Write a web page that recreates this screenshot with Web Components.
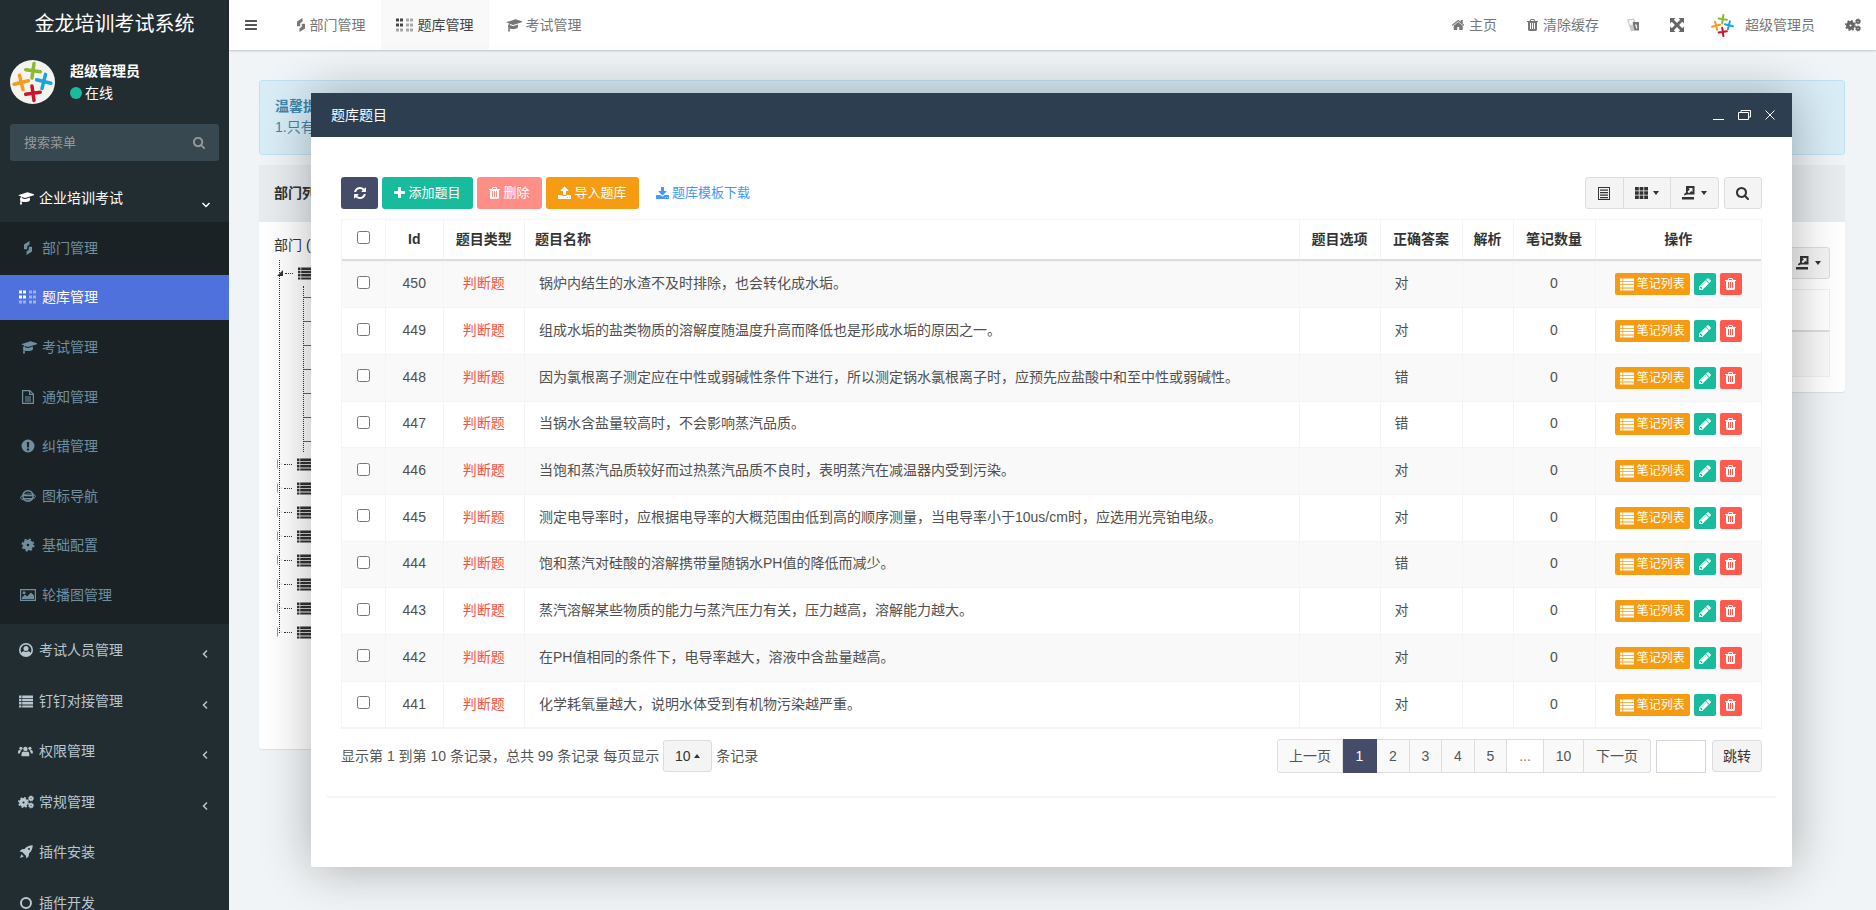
<!DOCTYPE html>
<html lang="zh">
<head>
<meta charset="utf-8">
<title>金龙培训考试系统</title>
<style>
html, body { margin: 0; height: 100%; overflow: hidden; }
body {
    display: flex;
    background: #f1f4f6;
    color: #333;
    font: 14px/20px "Liberation Sans", "Noto Sans CJK SC", sans-serif;
}
</style>
</head>
<body>
<side-bar></side-bar>
<main-col>
    <top-bar></top-bar>
    <page-content></page-content>
</main-col>
<exam-layer title="题库题目">
    <question-toolbar></question-toolbar>
    <question-table></question-table>
    <question-pager></question-pager>
</exam-layer>

<script>
'use strict'

const gear = (cx, cy, r) => `
    <circle cx="${cx}" cy="${cy}" r="${r * .5}" fill="none" stroke="currentColor" stroke-width="${r * .6}"/>
    <circle cx="${cx}" cy="${cy}" r="${r * .86}" fill="none" stroke="currentColor" stroke-width="${r * .28}"
        stroke-dasharray="${r * .338} ${r * .338}"/>`;

const ICONS = {
    bars: ['128 0 1536 1792', '<path d="M1664 1344v128q0 26-19 45t-45 19H192q-26 0-45-19t-19-45v-128q0-26 19-45t45-19h1408q26 0 45 19t19 45zm0-512v128q0 26-19 45t-45 19H192q-26 0-45-19t-19-45V832q0-26 19-45t45-19h1408q26 0 45 19t19 45zm0-512v128q0 26-19 45t-45 19H192q-26 0-45-19t-19-45V320q0-26 19-45t45-19h1408q26 0 45 19t19 45z"/>'],
    plus: ['192 0 1408 1792', '<path d="M1600 736v192q0 40-28 68t-68 28h-416v416q0 40-28 68t-68 28H800q-40 0-68-28t-28-68v-416H288q-40 0-68-28t-28-68V736q0-40 28-68t68-28h416V224q0-40 28-68t68-28h192q40 0 68 28t28 68v416h416q40 0 68 28t28 68z"/>'],
    search: ['64 0 1664 1792', '<path d="M1216 832q0-185-131.500-316.500T768 384 451.500 515.500 320 832t131.500 316.500T768 1280t316.500-131.500T1216 832zm512 832q0 52-38 90t-90 38q-54 0-90-38l-343-342q-179 124-399 124-143 0-273.500-55.500t-225-150-150-225T64 832t55.500-273.500 150-225 225-150T768 128t273.500 55.500 225 150 150 225T1472 832q0 220-124 399l343 343q37 37 37 90z"/>'],
    trash: ['192 0 1408 1792', '<path d="M704 1376V672q0-14-9-23t-23-9h-64q-14 0-23 9t-9 23v704q0 14 9 23t23 9h64q14 0 23-9t9-23zm256 0V672q0-14-9-23t-23-9h-64q-14 0-23 9t-9 23v704q0 14 9 23t23 9h64q14 0 23-9t9-23zm256 0V672q0-14-9-23t-23-9h-64q-14 0-23 9t-9 23v704q0 14 9 23t23 9h64q14 0 23-9t9-23zM672 384h448l-48-117q-7-9-17-11H738q-10 2-17 11zm928 32v64q0 14-9 23t-23 9h-96v948q0 83-47 143.500t-113 60.500H480q-66 0-113-58.500T320 1464V512h-96q-14 0-23-9t-9-23v-64q0-14 9-23t23-9h309l70-167q15-37 54-63t79-26h320q40 0 79 26t54 63l70 167h309q14 0 23 9t9 23z"/>'],
    home: ['100 0 1600 1792', '<path d="M1472 992v480q0 26-19 45t-45 19h-384v-384H768v384H384q-26 0-45-19t-19-45V992q0-1 .5-3t.5-3l575-474 575 474q1 2 1 6zm223-69l-62 74q-8 9-21 11h-3q-13 0-21-7L896 424l-692 577q-12 8-24 7-13-2-21-11l-62-74q-8-10-7-23.500t11-21.500l719-599q32-26 76-26t76 26l244 204V288q0-14 9-23t23-9h192q14 0 23 9t9 23v408l219 182q10 8 11 21.500t-7 23.500z"/>'],
    pencil: ['128 0 1536 1792', '<path d="M491 1536l91-91-235-235-91 91v107h128v128h107zm523-928q0-22-22-22-10 0-17 7l-542 542q-7 7-7 17 0 22 22 22 10 0 17-7l542-542q7-7 7-17zm-54-192l416 416-832 832H128v-416zm683 96q0 53-37 90l-166 166-416-416 166-165q36-38 90-38 53 0 91 38l235 234q37 39 37 91z"/>'],
    upload: ['64 0 1664 1792', '<path d="M1344 1472q0-26-19-45t-45-19-45 19-19 45 19 45 45 19 45-19 19-45zm256 0q0-26-19-45t-45-19-45 19-19 45 19 45 45 19 45-19 19-45zm128-224v320q0 40-28 68t-68 28H160q-40 0-68-28t-28-68v-320q0-40 28-68t68-28h427q21 56 70.500 92t110.500 36h256q61 0 110.500-36t70.500-92h427q40 0 68 28t28 68zm-325-648q-17 40-59 40h-256v448q0 26-19 45t-45 19H768q-26 0-45-19t-19-45V640H448q-42 0-59-40-17-39 14-69l448-448q18-19 45-19t45 19l448 448q31 30 14 69z"/>'],
    download: ['64 0 1664 1792', '<g transform="translate(0 128)"><path d="M1344 1344q0-26-19-45t-45-19-45 19-19 45 19 45 45 19 45-19 19-45zm256 0q0-26-19-45t-45-19-45 19-19 45 19 45 45 19 45-19 19-45zm128-224v320q0 40-28 68t-68 28H160q-40 0-68-28t-28-68v-320q0-40 28-68t68-28h465l135 136q58 56 136 56t136-56l136-136h464q40 0 68 28t28 68zm-325-569q17 41-14 70l-448 448q-18 19-45 19t-45-19L403 621q-31-29-14-70 17-39 59-39h256V64q0-26 19-45t45-19h256q26 0 45 19t19 45v448h256q42 0 59 39z"/></g>'],
    refresh: ['128 0 1536 1792', '<path d="M1639 1056q0 5-1 7-64 268-268 434.500T892 1664q-146 0-282.500-55T366 1452l-129 129q-19 19-45 19t-45-19-19-45v-448q0-26 19-45t45-19h448q26 0 45 19t19 45-19 45l-137 137q71 66 161 102t187 36q134 0 250-65t186-179q11-17 53-117 8-23 30-23h192q13 0 22.500 9.500t9.500 22.500zm25-800v448q0 26-19 45t-45 19h-448q-26 0-45-19t-19-45 19-45l138-138q-148-137-349-137-134 0-250 65T460 628q-11 17-53 117-8 23-30 23H178q-13 0-22.500-9.500T146 736v-7q65-268 270-434.500T896 128q146 0 284 55.500T1425 340l130-129q19-19 45-19t45 19 19 45z"/>'],
    cap: ['0 0 2304 1792', '<path d="M1774 836l18 316q4 69-82 128t-235 93.500-323 34.500-323-34.500-235-93.500-82-128l18-316 574 181q22 7 48 7t48-7zm530-324q0 23-22 31L1162 895q-4 1-10 1t-10-1L790 783q-38 30-62.500 98.500T703 1025q64 37 64 111 0 70-59 108l59 441q2 14-8 25-10 12-24 12H544q-14 0-24-12-10-11-8-25l59-441q-59-38-59-108 0-74 66-113 11-209 99-333l-333-104q-22-8-22-31t22-31l1120-352q4-1 10-1t10 1l1120 352q22 8 22 31z"/>'],
    list: ['0 0 14 14', '<path d="M0 1.500h2.500v2.500H0zM3.200 1.500H14v2.500H3.200zM0 4.800h2.500v2.500H0zM3.200 4.800H14v2.500H3.200zM0 8.100h2.500v2.500H0zM3.200 8.100H14v2.500H3.200zM0 11.400h2.500v2.100H0zM3.200 11.400H14v2.100H3.200z"/>'],
    listalt: ['0 0 14 14', '<path fill-rule="evenodd" d="M1 1h12v13H1zM2 2v11h10V2z"/><path d="M3 3.500h8v1.200H3zM3 6h8v1.200H3zM3 8.500h8v1.200H3zM3 11h8v1.200H3z"/>'],
    th: ['0 0 13 14', '<path d="M0 1h3.800v3.400H0zM4.600 1h3.800v3.400H4.600zM9.200 1H13v3.400H9.200zM0 5.300h3.800v3.400H0zM4.600 5.300h3.800v3.400H4.600zM9.200 5.300H13v3.400H9.200zM0 9.600h3.800V13H0zM4.600 9.600h3.800V13H4.600zM9.200 9.600H13V13H9.200z"/>'],
    exportbox: ['0 0 14 14', '<path d="M0 11h12v2.600H0zM4 0h8.500v8.500H5L2.500 9.500 2 8l2-1.500z"/><path fill="#f4f4f4" d="M6.500 2h4v4L9.300 5 7 7.300 5.500 5.800 7.800 3.300z"/>'],
    braille: ['0 0 18 14', [[1, 2, 1], [5, 2, 1], [1, 7, 1], [5, 7, 1], [1, 12, .45], [5, 12, .45], [11, 2, .45], [15, 2, .45], [11, 7, .45], [15, 7, .45], [11, 12, .45], [15, 12, .45]]
        .map(d => `<rect x="${d[0] - 1}" y="${d[1] - 1.500}" width="3" height="3" fill-opacity="${d[2]}"/>`).join('')],
    bolt: ['0 0 10 14', '<path d="M6.500 0L1 3.500V8.200H4.200V5.200L6.500 3.600zM3.500 14L9 10.500V5.800H5.800V8.800L3.500 10.400z"/>'],
    file: ['0 0 12 14', '<path fill-rule="evenodd" d="M0 0h8l4 4v10H0zM1.200 1.200v11.600h9.600V5H7V1.200zM8.200 1.700v2.100h2.100z"/><path d="M3 6.500h6v1H3zM3 8.500h6v1H3zM3 10.500h6v1H3z"/>'],
    alert: ['0 0 14 14', '<path fill-rule="evenodd" d="M7 .5a6.500 6.500 0 1 0 0 13A6.500 6.500 0 0 0 7 .5zM5.800 3h2.400l-.3 5.500H6.100zM5.900 9.500h2.200v2H5.900z"/>'],
    ie: ['0 0 16 14', '<circle cx="8" cy="7" r="5.200" fill="none" stroke="currentColor" stroke-width="1.500"/><path d="M3 6h10v1.300H3zM3.500 9h9v1.100h-9z"/><ellipse cx="8" cy="8" rx="7.500" ry="3" fill="none" stroke="currentColor" stroke-width=".9" transform="rotate(-6 8 8)"/>'],
    gear: ['0 0 14 14', gear(7, 7, 6.500)],
    cogs: ['0 0 16 14', gear(5.500, 7.500, 5.500) + gear(13, 3.500, 3) + gear(13, 10.500, 3)],
    image: ['0 0 16 14', '<path fill-rule="evenodd" d="M0 1h16v12H0zM1.200 2.200v9.600h13.600V2.200z"/><circle cx="4" cy="4.800" r="1.500"/><path d="M2 11v-1.500l3-3 2 2 4-4 3 3V11z"/>'],
    usercircle: ['0 0 14 14', '<path fill-rule="evenodd" d="M7 0a7 7 0 1 0 0 14A7 7 0 0 0 7 0zM7 1.500a5.500 5.500 0 0 1 4.600 8.500C11 8.800 10 8.300 9 8.300c-.6.500-1.300.7-2 .7s-1.400-.2-2-.7c-1 0-2 .5-2.600 1.700A5.500 5.500 0 0 1 7 1.500z"/><circle cx="7" cy="5.500" r="2.500"/>'],
    users: ['0 -1.500 18 17', '<circle cx="9" cy="4.500" r="2.700"/><circle cx="3.500" cy="3.800" r="1.900"/><circle cx="14.500" cy="3.800" r="1.900"/><path d="M4.300 13.500V10.500c0-2 1.200-3 2.700-3 .6.400 1.300.6 2 .6s1.400-.2 2-.6c1.500 0 2.700 1 2.700 3v3zM0 10V8c0-1.500 1-2.300 2-2.300.5.400 1 .6 1.700.6.200 0 .4 0 .6-.1-.3.700-.7 1.300-1.200 1.700-.5.500-.7 1.200-.8 2.100zM18 10V8c0-1.500-1-2.300-2-2.300-.5.400-1 .6-1.700.6-.2 0-.4 0-.6-.1.300.700.7 1.300 1.200 1.700.5.500.7 1.200.8 2.100z"/>'],
    rocket: ['0 0 14 14', '<path fill-rule="evenodd" d="M13.700.3c-3-.1-6 1.200-8.200 3.700L2.800 4.300.5 6.600l2.700.5 3.700 3.700.5 2.700 2.300-2.300.3-2.700c2.500-2.200 3.800-5.200 3.700-8.200zM10 3a1 1 0 1 1 0 2 1 1 0 0 1 0-2z"/><path d="M2.500 9.300l2.200 2.200-3.700 1.500z"/>'],
    ring: ['0 0 14 14', '<path fill-rule="evenodd" d="M7 1a6 6 0 1 0 0 12A6 6 0 0 0 7 1zM7 3a4 4 0 1 1 0 8 4 4 0 0 1 0-8z"/>'],
    expand: ['0 0 14 14', '<path d="M0 0h5.500L3.800 1.700 7 4.900l3.200-3.200L8.500 0H14v5.500l-1.700-1.700L9.100 7l3.200 3.200L14 8.500V14H8.500l1.700-1.700L7 9.100l-3.200 3.200L5.500 14H0V8.500l1.700 1.700L4.900 7 1.700 3.800 0 5.500z"/>'],
    translate: ['0 0 14 14', '<path fill="#c9c9c9" d="M1 1.500L8 .5l4 11-7 2z"/><path fill="#fff" d="M2.500 2.500L7 2l1.500 4-4.500 1z"/><path d="M6.500 4h6.500v8.500H8.500z"/><path fill="#fff" d="M9 6.500h1.500l.9 4h-1z"/>']
};

class FaIcon extends HTMLElement {

    constructor() {
        super();

        const shadow = this.attachShadow({mode: 'open'});
        const [box, inner] = ICONS[this.getAttribute('name')];

        shadow.innerHTML = `
            <style>
            :host {
                display: inline-block;
                line-height: 0;
                vertical-align: -.14em;
            }
            svg {
                display: block;
                flex: none;
                width: auto;
                height: 1em;
                fill: currentColor;
            }
            </style>
            <svg viewBox="${box}">${inner}</svg>
        `;
    }
}

customElements.define('fa-icon', FaIcon);

class AppLogo extends HTMLElement {

    constructor() {
        super();

        const shadow = this.attachShadow({mode: 'open'});
        const cross = (x, y, color, turn) => `
            <g transform="translate(${x} ${y}) rotate(${turn})" stroke="${color}" stroke-width="3.600" stroke-linecap="round">
                <path d="M-7.500 0H7.500M0-7.500V7.500"/>
            </g>
        `;

        shadow.innerHTML = `
            <style>
            :host {
                display: block;
                flex: none;
                border-radius: 50%;
                overflow: hidden;
                background: var(--logo-bg, #f4f4ef);
            }
            svg {
                display: block;
                width: 100%;
                height: 100%;
            }
            </style>
            <svg viewBox="0 0 45 45">
                ${cross(23, 11, '#8cb833', 8)}
                ${cross(11, 23, '#f39c1f', -14)}
                ${cross(34, 22, '#1ba3e0', 14)}
                ${cross(23, 34, '#c8162f', -8)}
            </svg>
        `;
    }
}

customElements.define('app-logo', AppLogo);

class SideBar extends HTMLElement {

    constructor() {
        super();

        const shadow = this.attachShadow({mode: 'open'});
        const subItems = [
            ['bolt', '部门管理'], ['braille', '题库管理', true], ['cap', '考试管理'], ['file', '通知管理'],
            ['alert', '纠错管理'], ['ie', '图标导航'], ['gear', '基础配置'], ['image', '轮播图管理']
        ];
        const topItems = [
            ['usercircle', '考试人员管理', true], ['list', '钉钉对接管理', true], ['users', '权限管理', true],
            ['cogs', '常规管理', true], ['rocket', '插件安装'], ['ring', '插件开发']
        ];

        shadow.innerHTML = `
            <style>
            :host {
                display: block;
                flex: none;
                width: 229px;
                height: 910px;
                overflow: hidden;
                background: #222d32;
                color: #b8c7ce;
            }
            .brand {
                height: 50px;
                color: #fff;
                font-size: 20px;
                line-height: 48px;
                text-align: center;
            }
            .user {
                display: flex;
                gap: 15px;
                height: 74px;
                padding: 10px 10px 0;
                box-sizing: border-box;
                color: #fff;
            }
            .user app-logo {
                width: 45px;
                height: 44px;
            }
            .user b {
                display: block;
                margin-top: 1px;
            }
            .user span {
                display: flex;
                align-items: center;
                gap: 3px;
                margin-top: 2px;
            }
            .user i {
                width: 12px;
                height: 12px;
                border-radius: 50%;
                background: #18bc9c;
            }
            .search {
                display: flex;
                align-items: center;
                justify-content: space-between;
                height: 37px;
                margin: 0 10px;
                padding: 0 14px;
                box-sizing: border-box;
                border-radius: 3px;
                background: #374850;
                color: #999;
                font-size: 13px;
            }
            .group {
                display: flex;
                align-items: center;
                height: 46px;
                margin-top: 15px;
                padding: 0 18px 0 16px;
                color: #fff;
            }
            .group span {
                flex: 1;
                margin-left: 5px;
                margin-bottom: 3px;
            }
            .group fa-icon:first-child {
                margin-bottom: 3px;
            }
            .chev {
                flex: none;
                width: 10px;
                height: 10px;
                fill: none;
                stroke: currentColor;
                stroke-width: 1.500;
            }
            .group .chev {
                margin-top: 12px;
            }
            .sub {
                padding: 3px 0 6px;
                background: #1a2226;
            }
            .sub a {
                display: flex;
                align-items: center;
                height: 45.600px;
                margin-bottom: 4px;
                padding-left: 20px;
                color: #6f8fa0;
            }
            .sub a:last-child {
                margin-bottom: 0;
            }
            .sub a.on {
                background: #4e71dc;
                color: #fff;
            }
            .sub a fa-icon {
                display: flex;
                justify-content: center;
                width: 15px;
                margin-right: 7px;
            }
            .top a {
                display: flex;
                align-items: center;
                height: 50.600px;
                padding: 2px 19px 0 18px;
                box-sizing: border-box;
            }
            .top a fa-icon {
                display: flex;
                justify-content: center;
                width: 15px;
                margin-right: 6px;
            }
            .top a span {
                flex: 1;
            }
            .top .chev {
                margin-top: 8px;
            }
            </style>
            <div class="brand">金龙培训考试系统</div>
            <div class="user">
                <app-logo></app-logo>
                <div>
                    <b>超级管理员</b>
                    <span><i></i>在线</span>
                </div>
            </div>
            <div class="search">搜索菜单<fa-icon name="search"></fa-icon></div>
            <div class="group">
                <fa-icon name="cap"></fa-icon>
                <span>企业培训考试</span>
                <svg class="chev" viewBox="0 0 10 10"><path d="M1.500 3l3.500 3.500L8.500 3"/></svg>
            </div>
            <div class="sub">
                ${subItems.map(item => `
                    <a class="${item[2] ? 'on' : ''}"><fa-icon name="${item[0]}"></fa-icon>${item[1]}</a>
                `).join('')}
            </div>
            <div class="top">
                ${topItems.map(item => `
                    <a>
                        <fa-icon name="${item[0]}"></fa-icon>
                        <span>${item[1]}</span>
                        ${item[2] ? '<svg class="chev" viewBox="0 0 10 10"><path d="M7 1.500L3.500 5 7 8.500"/></svg>' : ''}
                    </a>
                `).join('')}
            </div>
        `;
    }
}

customElements.define('side-bar', SideBar);

class MainCol extends HTMLElement {

    constructor() {
        super();

        const shadow = this.attachShadow({mode: 'open'});

        shadow.innerHTML = `
            <style>
            :host {
                display: flex;
                flex-direction: column;
                flex: 1;
                min-width: 0;
            }
            </style>
            <slot></slot>
        `;
    }
}

customElements.define('main-col', MainCol);

class TopBar extends HTMLElement {

    constructor() {
        super();

        const shadow = this.attachShadow({mode: 'open'});

        shadow.innerHTML = `
            <style>
            :host {
                display: flex;
                align-items: stretch;
                height: 50px;
                padding-left: 16px;
                background: #fff;
                box-shadow: 0 1px 2px rgba(0, 0, 0, .2);
                color: #777;
            }
            .toggle {
                display: flex;
                align-items: center;
                width: 35.500px;
                color: #555;
            }
            .tab {
                display: flex;
                align-items: center;
                gap: 4px;
                padding: 0 15px;
            }
            .tab:first-of-type {
                gap: 8px;
            }
            .tab.on {
                background: #f9f9f9;
                color: #444;
            }
            .right {
                display: flex;
                align-items: center;
                margin-left: auto;
            }
            .right span {
                display: flex;
                align-items: center;
            }
            .home { gap: 5px; margin-right: 30px; }
            .clear { gap: 5px; margin-right: 27px; }
            .lang { margin-right: 29.500px; }
            .full { margin-right: 26.500px; color: #666; }
            .me { gap: 10px; margin-right: 30px; }
            .me app-logo {
                --logo-bg: #fff;
                width: 25px;
                height: 25px;
            }
            .gears { margin-right: 15px; color: #666; }
            </style>
            <div class="toggle"><fa-icon name="bars"></fa-icon></div>
            <div class="tab"><fa-icon name="bolt"></fa-icon>部门管理</div>
            <div class="tab on"><fa-icon name="braille"></fa-icon>题库管理</div>
            <div class="tab"><fa-icon name="cap"></fa-icon>考试管理</div>
            <div class="right">
                <span class="home"><fa-icon name="home"></fa-icon>主页</span>
                <span class="clear"><fa-icon name="trash"></fa-icon>清除缓存</span>
                <span class="lang"><fa-icon name="translate"></fa-icon></span>
                <span class="full"><fa-icon name="expand"></fa-icon></span>
                <span class="me"><app-logo></app-logo>超级管理员</span>
                <span class="gears"><fa-icon name="cogs"></fa-icon></span>
            </div>
        `;
    }
}

customElements.define('top-bar', TopBar);

class DeptTree extends HTMLElement {

    constructor() {
        super();

        const shadow = this.attachShadow({mode: 'open'});
        const node = (open) => `
            <div class="node">
                <i class="${open ? 'open' : 'shut'}"></i><u></u><fa-icon name="list"></fa-icon>
            </div>
        `;

        shadow.innerHTML = `
            <style>
            :host {
                display: block;
                position: relative;
                margin-top: 6px;
                padding-left: 3px;
            }
            .stem {
                position: absolute;
                left: 5px;
                top: -1px;
                bottom: 11px;
                border-left: 1px dotted #333;
            }
            .node {
                display: flex;
                align-items: center;
                position: relative;
                height: 24px;
            }
            i {
                width: 0;
                height: 0;
                margin-right: 2px;
            }
            i.open {
                border-bottom: 6px solid #333;
                border-left: 6px solid transparent;
            }
            i.shut {
                width: 3px;
                height: 8px;
                border: 1px solid #aaa;
                border-left-color: #999;
                clip-path: polygon(0 0, 100% 50%, 0 100%);
            }
            u {
                width: 8px;
                margin-right: 5px;
                border-top: 1px dotted #333;
            }
            fa-icon {
                color: #333;
                font-size: 14px;
            }
            .kids {
                height: 166px;
                margin: 1px 0 0 26px;
                border-left: 1px dotted #333;
                background: repeating-linear-gradient(to bottom, transparent 0 11px, #666 11px 12px, transparent 12px 24px) no-repeat 0 0 / 8px 100%;
            }
            </style>
            <div class="stem"></div>
            ${node(true)}
            <div class="kids"></div>
            <div class="nodes">${[1, 2, 3, 4, 5, 6, 7, 8].map(() => node(false)).join('')}</div>
        `;
    }
}

customElements.define('dept-tree', DeptTree);

class PageContent extends HTMLElement {

    constructor() {
        super();

        const shadow = this.attachShadow({mode: 'open'});

        shadow.innerHTML = `
            <style>
            :host {
                display: block;
                padding: 30px 31px 0 30px;
            }
            .alert {
                height: 75px;
                padding: 15px 15px;
                box-sizing: border-box;
                border: 1px solid #bfe2f3;
                border-radius: 3px;
                background: #d9edf7;
                color: #3a87ad;
                line-height: 21px;
            }
            .cols {
                display: flex;
                align-items: flex-start;
                margin-top: 10px;
            }
            .panel {
                border-radius: 3px;
                background: #fff;
                box-shadow: 0 1px 1px rgba(0, 0, 0, .08);
            }
            .left {
                flex: none;
                width: 400px;
                height: 584px;
            }
            .right {
                flex: 1;
                height: 227px;
            }
            .head {
                height: 57px;
                padding: 0 15px;
                background: #e8ecef;
                font-weight: bold;
                line-height: 56px;
            }
            .body {
                padding: 13px 15px;
            }
            .tools {
                display: flex;
                justify-content: flex-end;
                margin-top: 25px;
            }
            .tools div {
                display: flex;
                align-items: center;
                gap: 5px;
                height: 30px;
                padding: 0 8px;
                border: 1px solid #ddd;
                border-radius: 3px;
                background: #f4f4f4;
                color: #333;
            }
            .mini {
                height: 86px;
                margin-top: 10px;
                border: 1px solid #f0f0f0;
                background: linear-gradient(#fff 0 40px, #ddd 40px 42px, #f9f9f9 42px);
            }
            .caret {
                width: 0;
                height: 0;
                border: 3px solid transparent;
                border-top: 4px solid #333;
                border-bottom: 0;
            }
            </style>
            <div class="alert"><b>温馨提示</b><br>1.只有</div>
            <div class="cols">
                <div class="panel left">
                    <div class="head">部门列表</div>
                    <div class="body">部门 (<dept-tree></dept-tree></div>
                </div>
                <div class="panel right">
                    <div class="head"></div>
                    <div class="body" style="padding:0 15px">
                        <div class="tools"><div><fa-icon name="exportbox"></fa-icon><span class="caret"></span></div></div>
                        <div class="mini"></div>
                    </div>
                </div>
            </div>
        `;
    }
}

customElements.define('page-content', PageContent);

class ExamLayer extends HTMLElement {

    constructor() {
        super();

        const shadow = this.attachShadow({mode: 'open'});

        shadow.innerHTML = `
            <style>
            :host {
                display: flex;
                flex-direction: column;
                position: absolute;
                left: 311px;
                top: 93px;
                width: 1481px;
                height: 773.500px;
                border-radius: 2px;
                background: #fff;
                box-shadow: 1px 1px 50px rgba(0, 0, 0, .3);
            }
            .bar {
                display: flex;
                align-items: center;
                flex: none;
                height: 44px;
                padding: 0 17px 0 20px;
                background: #2c3e50;
                color: #fff;
            }
            .bar span {
                flex: 1;
            }
            .bar svg {
                display: block;
                margin-left: 14px;
                fill: none;
                stroke: #fff;
            }
            .panel {
                display: flex;
                flex-direction: column;
                gap: 10px;
                margin: 0 15px;
                padding: 40px 15px 0;
                height: 661px;
                box-sizing: border-box;
                border-bottom: 2px solid #f4f4f4;
                border-radius: 0 0 3px 3px;
            }
            </style>
            <div class="bar">
                <span>${this.getAttribute('title')}</span>
                <svg width="11" height="12" viewBox="0 0 11 12"><path d="M0 10.500h11"/></svg>
                <svg width="13" height="12" viewBox="0 0 13 12"><path d="M.5 3.500h10v7H.5zM3 3.500v-2h9.500v6.500h-2"/></svg>
                <svg width="10" height="10" viewBox="0 0 10 10"><path d="M.5.5l9 9M9.500.5l-9 9"/></svg>
            </div>
            <div class="panel"><slot></slot></div>
        `;
    }
}

customElements.define('exam-layer', ExamLayer);

class QuestionToolbar extends HTMLElement {

    constructor() {
        super();

        const shadow = this.attachShadow({mode: 'open'});

        shadow.innerHTML = `
            <style>
            :host {
                display: flex;
                align-items: center;
                height: 32px;
                font-size: 13px;
            }
            .btn {
                display: flex;
                align-items: center;
                justify-content: center;
                gap: 3px;
                height: 32px;
                margin-right: 4px;
                border-radius: 3px;
                color: #fff;
            }
            .link {
                display: flex;
                align-items: center;
                gap: 3px;
                margin-left: 13px;
                color: #4397fd;
            }
            .tools {
                display: flex;
                height: 32px;
                margin-left: auto;
                box-sizing: border-box;
                border: 1px solid #ddd;
                border-radius: 3px;
                background: #f4f4f4;
                color: #333;
            }
            .tools span {
                display: flex;
                align-items: center;
                justify-content: center;
                gap: 5px;
                border-left: 1px solid #ddd;
            }
            .tools span:first-child {
                border-left: 0;
            }
            .find {
                display: flex;
                align-items: center;
                justify-content: center;
                box-sizing: border-box;
                width: 38.500px;
                height: 32px;
                margin-left: 5px;
                border: 1px solid #ddd;
                border-radius: 3px;
                background: #f4f4f4;
                color: #333;
            }
            .caret {
                width: 0;
                height: 0;
                border: 3px solid transparent;
                border-top: 4px solid #333;
                border-bottom: 0;
            }
            fa-icon {
                font-size: 14px;
            }
            </style>
            <div class="btn" style="width:37px;background:#444c69"><fa-icon name="refresh"></fa-icon></div>
            <div class="btn" style="width:91px;background:#18bc9c"><fa-icon name="plus"></fa-icon>添加题目</div>
            <div class="btn" style="width:65px;background:#fd8f87"><fa-icon name="trash"></fa-icon>删除</div>
            <div class="btn" style="width:93px;background:#f59c12"><fa-icon name="upload"></fa-icon>导入题库</div>
            <div class="link"><fa-icon name="download"></fa-icon>题库模板下载</div>
            <div class="tools">
                <span style="width:37px"><fa-icon name="listalt"></fa-icon></span>
                <span style="width:46.500px"><fa-icon name="th"></fa-icon><i class="caret"></i></span>
                <span style="width:46.500px"><fa-icon name="exportbox"></fa-icon><i class="caret"></i></span>
            </div>
            <div class="find"><fa-icon name="search"></fa-icon></div>
        `;
    }
}

customElements.define('question-toolbar', QuestionToolbar);

class QuestionTable extends HTMLElement {

    constructor() {
        super();

        const shadow = this.attachShadow({mode: 'open'});

        shadow.innerHTML = `
            <style>
            :host {
                display: block;
                border: 1px solid #f4f4f4;
                border-bottom-width: 2px;
                color: #505050;
            }
            .row {
                display: grid;
                grid-template-columns: 43px 57.500px 81.500px 774.500px 81px 82px 51px 82px 1fr;
                height: 46.700px;
                border-top: 1px solid #f4f4f4;
                box-sizing: border-box;
            }
            .list .row:nth-child(odd) {
                background: #f9f9f9;
            }
            .row.head {
                height: 40.500px;
                border-top: 0;
                border-bottom: 2px solid #ddd;
                color: #333;
                font-weight: bold;
            }
            .row > div {
                display: flex;
                align-items: center;
                justify-content: center;
                border-left: 1px solid #f4f4f4;
                min-width: 0;
            }
            .list .row > div:not(.ops) {
                padding-bottom: 2px;
            }
            .row > div:first-child {
                border-left: 0;
            }
            .row > .left {
                justify-content: flex-start;
                padding-left: 14px;
            }
            .head > .left {
                padding-left: 10px;
            }
            .kind {
                color: #f75444;
            }
            input {
                width: 13px;
                height: 13px;
                margin: 0 0 4px;
            }
            .list input {
                margin-bottom: 2px;
            }
            .ops {
                gap: 4px;
            }
            .op {
                display: flex;
                align-items: center;
                justify-content: center;
                gap: 3px;
                height: 22px;
                min-width: 22px;
                border-radius: 2px;
                color: #fff;
                font-size: 12px;
            }
            .op fa-icon {
                font-size: 14px;
            }
            </style>
            <div class="row head">
                <div><input type="checkbox"></div>
                <div>Id</div>
                <div>题目类型</div>
                <div class="left">题目名称</div>
                <div>题目选项</div>
                <div>正确答案</div>
                <div>解析</div>
                <div>笔记数量</div>
                <div>操作</div>
            </div>
            <div class="list"></div>
        `;

        this.body = shadow.querySelector('.list');
        this.questions = [];
    }

    connectedCallback() {
        this.questions = [
            [450, '锅炉内结生的水渣不及时排除，也会转化成水垢。', '对'],
            [449, '组成水垢的盐类物质的溶解度随温度升高而降低也是形成水垢的原因之一。', '对'],
            [448, '因为氯根离子测定应在中性或弱碱性条件下进行，所以测定锅水氯根离子时，应预先应盐酸中和至中性或弱碱性。', '错'],
            [447, '当锅水含盐量较高时，不会影响蒸汽品质。', '错'],
            [446, '当饱和蒸汽品质较好而过热蒸汽品质不良时，表明蒸汽在减温器内受到污染。', '对'],
            [445, '测定电导率时，应根据电导率的大概范围由低到高的顺序测量，当电导率小于10us/cm时，应选用光亮铂电级。', '对'],
            [444, '饱和蒸汽对硅酸的溶解携带量随锅水PH值的降低而减少。', '错'],
            [443, '蒸汽溶解某些物质的能力与蒸汽压力有关，压力越高，溶解能力越大。', '对'],
            [442, '在PH值相同的条件下，电导率越大，溶液中含盐量越高。', '对'],
            [441, '化学耗氧量越大，说明水体受到有机物污染越严重。', '对']
        ];
        this.update();
    }

    update() {
        this.body.innerHTML = '';
        this.questions.forEach(q => {
            this.body.innerHTML += `
                <div class="row">
                    <div><input type="checkbox"></div>
                    <div>${q[0]}</div>
                    <div class="kind">判断题</div>
                    <div class="left">${q[1]}</div>
                    <div></div>
                    <div class="left">${q[2]}</div>
                    <div></div>
                    <div>0</div>
                    <div class="ops">
                        <span class="op" style="width:75px;background:#f59c12"><fa-icon name="list"></fa-icon>笔记列表</span>
                        <span class="op" style="background:#18bc9c"><fa-icon name="pencil"></fa-icon></span>
                        <span class="op" style="background:#ff5a4d"><fa-icon name="trash"></fa-icon></span>
                    </div>
                </div>
            `;
        });
    }
}

customElements.define('question-table', QuestionTable);

class QuestionPager extends HTMLElement {

    constructor() {
        super();

        const shadow = this.attachShadow({mode: 'open'});
        const pages = [['上一页', 66], ['1', 34, 'on'], ['2', 33], ['3', 32], ['4', 33], ['5', 32], ['...', 37, 'gap'], ['10', 40], ['下一页', 67]];

        shadow.innerHTML = `
            <style>
            :host {
                display: flex;
                align-items: center;
                height: 34px;
                color: #555;
            }
            .size {
                display: flex;
                align-items: center;
                justify-content: center;
                gap: 4px;
                box-sizing: border-box;
                width: 49px;
                height: 32px;
                margin: 0 4px;
                border: 1px solid #ddd;
                border-radius: 3px;
                background: #f4f4f4;
                color: #333;
            }
            .size i {
                width: 0;
                height: 0;
                border: 3px solid transparent;
                border-bottom: 4px solid #333;
                border-top: 0;
            }
            .pages {
                display: flex;
                margin-left: auto;
                height: 34px;
            }
            .pages a {
                display: flex;
                align-items: center;
                justify-content: center;
                box-sizing: border-box;
                border: 1px solid #ddd;
                border-left-width: 0;
                background: #f9f9f9;
            }
            .pages a:first-child {
                border-left-width: 1px;
                border-radius: 3px 0 0 3px;
            }
            .pages a:last-child {
                border-radius: 0 3px 3px 0;
            }
            .pages a.on {
                border-color: #444c69;
                background: #444c69;
                color: #fff;
            }
            .pages a.gap {
                background: #fff;
                color: #777;
            }
            input {
                box-sizing: border-box;
                width: 50px;
                height: 33px;
                margin: 0 6px 0 5px;
                padding: 0;
                border: 1px solid #d2d6e4;
                background: #fff;
            }
            .go {
                display: flex;
                align-items: center;
                justify-content: center;
                box-sizing: border-box;
                width: 50px;
                height: 32px;
                border: 1px solid #ddd;
                border-radius: 3px;
                background: #f4f4f4;
                color: #333;
            }
            </style>
            显示第 1 到第 10 条记录，总共 99 条记录 每页显示
            <div class="size">10<i></i></div>条记录
            <div class="pages">
                ${pages.map(p => `<a class="${p[2] || ''}" style="width:${p[1]}px">${p[0]}</a>`).join('')}
            </div>
            <input type="text">
            <div class="go">跳转</div>
        `;
    }
}

customElements.define('question-pager', QuestionPager);
</script>
</body>
</html>
